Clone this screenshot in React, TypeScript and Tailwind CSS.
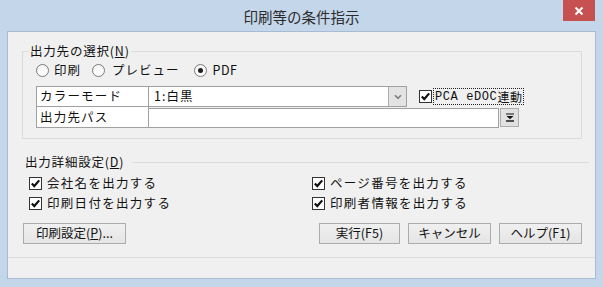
import React from "react";

const Check = () => (
  <span className="w-[13px] h-[13px] border border-[#333333] bg-white flex items-center justify-center shrink-0">
    <svg width="11" height="11" viewBox="0 0 11 11">
      <path d="M1.8 5.4 L4.3 8 L9.2 2.4" fill="none" stroke="#111" strokeWidth="2.2" />
    </svg>
  </span>
);

const Radio = ({ on }: { on?: boolean }) => (
  <span className="w-[13px] h-[13px] rounded-full border border-[#7a7a7a] bg-gradient-to-b from-[#f4f4f4] to-white flex items-center justify-center shrink-0">
    {on && <span className="w-[5px] h-[5px] rounded-full bg-[#1e1e1e]" />}
  </span>
);

const Btn = ({ w, children }: { w: string; children: React.ReactNode }) => (
  <div
    className={`${w} h-[21px] border border-[#acacac] bg-gradient-to-b from-[#f0f0f0] to-[#e5e5e5] flex items-center justify-center text-[12.5px] text-[#111]`}
  >
    {children}
  </div>
);

export default function App() {
  return (
    <div className="w-[603px] h-[287px] bg-[#c4d6e9] flex flex-col font-['Noto_Sans_CJK_JP',sans-serif] text-[12px] text-[#111] leading-none">
      {/* title bar */}
      <div className="h-[31px] relative flex items-center justify-center shrink-0">
        <span className="text-[14.5px] text-[#2b2b2b] mt-[3px]">印刷等の条件指示</span>
        <div className="absolute right-[8px] top-0 w-[32px] h-[21px] bg-[#c75050] flex items-center justify-center">
          <svg width="10" height="10" viewBox="0 0 10 10">
            <path d="M1.5 1.5 L8.5 8.5 M8.5 1.5 L1.5 8.5" stroke="white" strokeWidth="2" />
          </svg>
        </div>
      </div>

      {/* content */}
      <div className="mx-[7px] h-[248px] shrink-0 bg-[#f0f0f0] border border-[#a7bcd2] flex flex-col">
        {/* group box 1 */}
        <div className="relative ml-[14px] mt-[19px] w-[560px] h-[88px] border border-[#dcdcdc] flex flex-col">
          <span className="absolute left-[6px] -top-[9px] bg-[#f0f0f0] px-[1px] leading-[16px] text-[12.5px] tracking-[0.8px]">
            出力先の選択(<span className="underline">N</span>)
          </span>
          {/* radio row */}
          <div className="mt-[10px] ml-[13px] h-[16px] flex items-center text-[12.5px] tracking-[1px]">
            <Radio />
            <span className="ml-[5px]">印刷</span>
            <span className="ml-[11px]"><Radio /></span>
            <span className="ml-[7px]">プレビュー</span>
            <span className="ml-[14px]"><Radio on /></span>
            <span className="ml-[6px] tracking-[0.5px]">PDF</span>
          </div>
          {/* table */}
          <div className="mt-[8px] ml-[13px] flex flex-col">
            <div className="flex items-center">
              <div className="w-[113px] h-[21px] border border-[#a0a0a0] bg-white flex items-center pl-[3px] text-[12.5px] tracking-[1.2px]">
                カラーモード
              </div>
              <div className="-ml-px w-[259px] h-[21px] border border-[#a0a0a0] bg-white flex items-center">
                <span className="flex-1 pl-[5px] text-[12.5px] tracking-[1px]">1:白黒</span>
                <div className="w-[18px] h-[19px] bg-[#e3e3e3] border-l border-[#acacac] flex items-center justify-center">
                  <svg width="8" height="6" viewBox="0 0 8 6">
                    <path d="M1 1.2 L4 4.4 L7 1.2" fill="none" stroke="#7f7f7f" strokeWidth="1.6" />
                  </svg>
                </div>
              </div>
              <div className="ml-[12px] flex items-center">
                <Check />
                <span className="ml-[2px] px-[1px] h-[15px] flex items-center outline-1 outline-dotted outline-[#222] outline-offset-0 text-[12px] tracking-[0.6px] font-['Liberation_Mono','Noto_Sans_CJK_JP',monospace]">
                  PCA eDOC<span className="font-['Noto_Sans_CJK_JP'] tracking-[0.5px]">連動</span>
                </span>
              </div>
            </div>
            <div className="flex items-center -mt-px">
              <div className="w-[113px] h-[22px] border border-[#a0a0a0] bg-white flex items-center pl-[3px] text-[12.5px] tracking-[1.2px]">
                出力先パス
              </div>
              <div className="-ml-px w-[351px] h-[20px] mt-[1px] border border-[#a0a0a0] bg-white" />
              <div className="ml-[1px] w-[19px] h-[19px] mt-[1px] border border-[#adadad] bg-[#e1e1e1] flex items-center justify-center">
                <svg width="10" height="9" viewBox="0 0 10 9">
                  <path d="M1 1 H9" stroke="#111" strokeWidth="1" />
                  <path d="M1.5 3 H8.5 L5 6.2 Z" fill="#111" />
                  <path d="M1 8 H9" stroke="#111" strokeWidth="1.4" />
                </svg>
              </div>
            </div>
          </div>
        </div>

        {/* group 2 label */}
        <div className="mt-[15px] ml-[17px] w-[564px] h-[16px] flex items-center">
          <span className="text-[12.5px] tracking-[0.8px]">
            出力詳細設定(<span className="underline">D</span>)
          </span>
          <div className="flex-1 ml-[8px] h-px bg-[#dcdcdc]" />
        </div>

        {/* checkboxes */}
        <div className="mt-[3px] ml-[21px] grid grid-cols-[283px_1fr] text-[12.5px] tracking-[1.3px]">
          <div className="h-[20px] flex items-center"><Check /><span className="ml-[5px]">会社名を出力する</span></div>
          <div className="h-[20px] flex items-center"><Check /><span className="ml-[5px]">ページ番号を出力する</span></div>
          <div className="h-[20px] flex items-center"><Check /><span className="ml-[5px]">印刷日付を出力する</span></div>
          <div className="h-[20px] flex items-center"><Check /><span className="ml-[5px]">印刷者情報を出力する</span></div>
        </div>

        {/* buttons */}
        <div className="mt-[10px] ml-[15px] w-[559px] flex items-center">
          <Btn w="w-[103px]">
            印刷設定(<span className="underline">P</span>)...
          </Btn>
          <div className="flex-1" />
          <Btn w="w-[81px]">実行(F5)</Btn>
          <div className="w-[8px]" />
          <Btn w="w-[83px]">キャンセル</Btn>
          <div className="w-[8px]" />
          <Btn w="w-[83px]">ヘルプ(F1)</Btn>
        </div>

        {/* separator */}
        <div className="mt-[13px] h-px bg-[#dcdcdc]" />
      </div>
    </div>
  );
}
